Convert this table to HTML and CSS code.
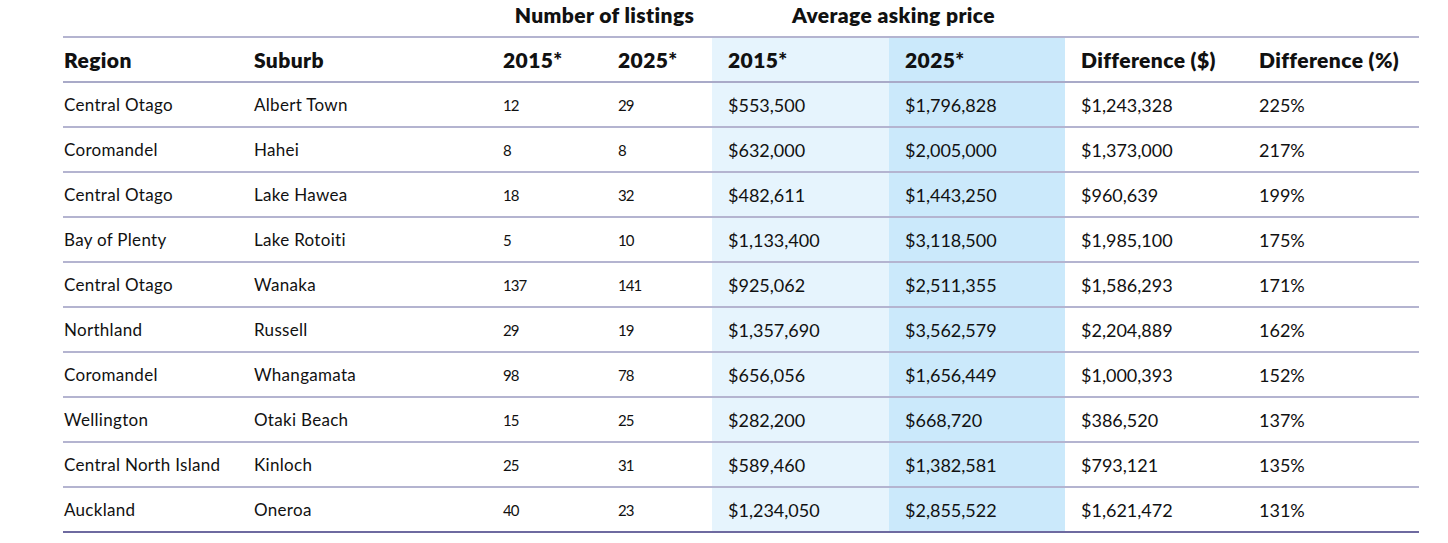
FILE: index.html
```html
<!DOCTYPE html>
<html lang="en">
<head>
<meta charset="utf-8">
<title>Listings</title>
<link rel="stylesheet" href="styles.css">
</head>
<body>
<table class="tbl">
  <colgroup>
    <col class="c-region"><col class="c-suburb"><col class="c-n1"><col class="c-n2">
    <col class="c-p1"><col class="c-p2"><col class="c-d1"><col class="c-d2">
  </colgroup>
  <thead>
    <tr class="group">
      <th colspan="2"></th>
      <th colspan="2" class="grp">Number of listings</th>
      <th colspan="2" class="grp">Average asking price</th>
      <th colspan="2"></th>
    </tr>
    <tr class="head">
      <th>Region</th><th>Suburb</th><th>2015*</th><th>2025*</th>
      <th class="shade1">2015*</th><th class="shade2">2025*</th>
      <th>Difference ($)</th><th>Difference (%)</th>
    </tr>
  </thead>
  <tbody>
    <tr><td class="txt">Central Otago</td><td class="txt">Albert Town</td><td class="num">12</td><td class="num">29</td><td class="big shade1">$553,500</td><td class="big shade2">$1,796,828</td><td class="big">$1,243,328</td><td class="big">225%</td></tr>
    <tr><td class="txt">Coromandel</td><td class="txt">Hahei</td><td class="num">8</td><td class="num">8</td><td class="big shade1">$632,000</td><td class="big shade2">$2,005,000</td><td class="big">$1,373,000</td><td class="big">217%</td></tr>
    <tr><td class="txt">Central Otago</td><td class="txt">Lake Hawea</td><td class="num">18</td><td class="num">32</td><td class="big shade1">$482,611</td><td class="big shade2">$1,443,250</td><td class="big">$960,639</td><td class="big">199%</td></tr>
    <tr><td class="txt">Bay of Plenty</td><td class="txt">Lake Rotoiti</td><td class="num">5</td><td class="num">10</td><td class="big shade1">$1,133,400</td><td class="big shade2">$3,118,500</td><td class="big">$1,985,100</td><td class="big">175%</td></tr>
    <tr><td class="txt">Central Otago</td><td class="txt">Wanaka</td><td class="num">137</td><td class="num">141</td><td class="big shade1">$925,062</td><td class="big shade2">$2,511,355</td><td class="big">$1,586,293</td><td class="big">171%</td></tr>
    <tr><td class="txt">Northland</td><td class="txt">Russell</td><td class="num">29</td><td class="num">19</td><td class="big shade1">$1,357,690</td><td class="big shade2">$3,562,579</td><td class="big">$2,204,889</td><td class="big">162%</td></tr>
    <tr><td class="txt">Coromandel</td><td class="txt">Whangamata</td><td class="num">98</td><td class="num">78</td><td class="big shade1">$656,056</td><td class="big shade2">$1,656,449</td><td class="big">$1,000,393</td><td class="big">152%</td></tr>
    <tr><td class="txt">Wellington</td><td class="txt">Otaki Beach</td><td class="num">15</td><td class="num">25</td><td class="big shade1">$282,200</td><td class="big shade2">$668,720</td><td class="big">$386,520</td><td class="big">137%</td></tr>
    <tr><td class="txt">Central North Island</td><td class="txt">Kinloch</td><td class="num">25</td><td class="num">31</td><td class="big shade1">$589,460</td><td class="big shade2">$1,382,581</td><td class="big">$793,121</td><td class="big">135%</td></tr>
    <tr class="last"><td class="txt">Auckland</td><td class="txt">Oneroa</td><td class="num">40</td><td class="num">23</td><td class="big shade1">$1,234,050</td><td class="big shade2">$2,855,522</td><td class="big">$1,621,472</td><td class="big">131%</td></tr>
  </tbody>
</table>
</body>
</html>
```
FILE: styles.css
```css
html, body {
  margin: 0;
  padding: 0;
  background: #ffffff;
}
body {
  font-family: "Lato", "Noto Sans", sans-serif;
  color: #111111;
}
.tbl {
  border-collapse: collapse;
  table-layout: fixed;
  width: 1356px;
  margin-left: 63px;
}
.c-region { width: 175px; }
.c-suburb { width: 249px; }
.c-n1 { width: 115px; }
.c-n2 { width: 110px; }
.c-p1 { width: 177px; }
.c-p2 { width: 176px; }
.c-d1 { width: 178px; }
.c-d2 { width: 176px; }

th, td {
  padding: 0 0 0 16px;
  text-align: left;
  white-space: nowrap;
  vertical-align: middle;
}
th:first-child, td:first-child { padding-left: 1px; }

.group th {
  height: 37px;
  padding: 0;
  font-size: 21px;
  font-weight: 800;
  vertical-align: top;
  padding-top: 2px;
  box-sizing: border-box;
  letter-spacing: 0.4px;
}
.group .grp {
  text-align: center;
  padding-left: 10px;
}
.head th {
  height: 45px;
  box-sizing: border-box;
  font-size: 21px;
  font-weight: 800;
  letter-spacing: 0.4px;
  border-top: 2px solid #b4b4d0;
  border-bottom: 2px solid #a9aac8;
}
tbody td {
  height: 45px;
  box-sizing: border-box;
  border-bottom: 2px solid #b4b4d0;
}
tbody tr.last td { border-bottom-color: #6e6aa0; }
.txt { font-size: 17px; letter-spacing: 0.3px; }
.num { font-size: 15px; letter-spacing: -0.9px; }
.big { font-size: 18px; }
.shade1 { background: #e6f4fd; }
.shade2 { background: #cbe9fb; }
```
